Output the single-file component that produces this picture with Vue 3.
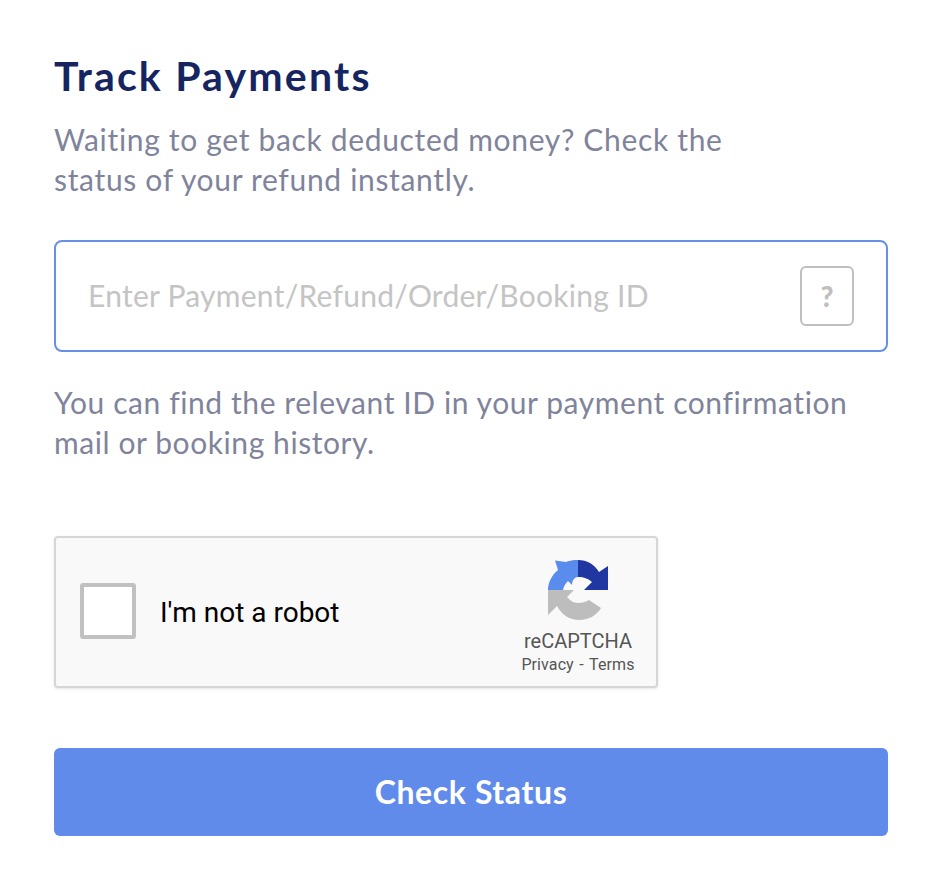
<script setup>
const title = 'Track Payments'
</script>

<template>
  <main class="page">
    <h1 class="title">{{ title }}</h1>
    <p class="copy">Waiting to get back deducted money? Check the<br />status of your refund instantly.</p>
    <div class="field">
      <span class="placeholder">Enter Payment/Refund/Order/Booking ID</span>
      <span class="help">?</span>
    </div>
    <p class="copy hint">You can find the relevant ID in your payment confirmation<br />mail or booking history.</p>
    <div class="captcha">
      <span class="box"></span>
      <span class="robot">I'm not a robot</span>
      <div class="brand">
        <svg class="logo" viewBox="0 0 60 60" width="60" height="60">
          <path fill="#5a8cee" d="M30 0C25 0 22 0.500 18 2L7 0.500L10 10C4 15 0 22 0 30H15C15.500 27 17 24 20 21L24 25C24 20 27 17 30 17Z" />
          <path fill="#2036a0" d="M30 0C39 0 46 4 51 12L60 6V30H36L44 22C41 19 36 17 30 17Z" />
          <path fill="#bdbdbd" d="M0 30V55L9 46C14 55 22 60 31 60C41 60 49 55 53 48L41 40C38 42 34 43 30 43C25 43 22 40 19 37L26 30Z" />
        </svg>
        <span class="brand-name">reCAPTCHA</span>
        <span class="brand-links">Privacy - Terms</span>
      </div>
    </div>
    <button class="submit" type="button"><span class="submit-label">Check Status</span></button>
  </main>
</template>

<style scoped>
.page {
  box-sizing: border-box;
  width: 940px;
  height: 884px;
  padding: 52px 52px 0 54px;
  background: #fff;
  font-family: Lato, "Noto Sans", sans-serif;
}
.title {
  margin: 0;
  font-size: 41px;
  line-height: 48px;
  font-weight: 700;
  color: #16255f;
  letter-spacing: 2.2px;
}
.copy {
  margin: 19px 0 0;
  font-size: 30px;
  line-height: 40px;
  letter-spacing: 0.67px;
  color: #7f849c;
}
.field {
  box-sizing: border-box;
  margin-top: 41px;
  height: 112px;
  padding: 0 32px;
  border: 2px solid #6590e6;
  border-radius: 8px;
  display: flex;
  align-items: center;
  justify-content: space-between;
}
.placeholder {
  margin-top: -2px;
  font-size: 30px;
  letter-spacing: 0.26px;
  color: #c4c4c4;
}
.help {
  box-sizing: border-box;
  width: 54px;
  height: 60px;
  border: 2px solid #bfbfbf;
  border-radius: 6px;
  display: flex;
  align-items: center;
  justify-content: center;
  font-size: 28px;
  font-weight: 900;
  color: #bfbfbf;
}
.hint {
  margin-top: 30px;
  letter-spacing: 0.58px;
}
.captcha {
  box-sizing: border-box;
  margin-top: 74px;
  width: 604px;
  height: 152px;
  padding: 0 21px 0 24px;
  border: 2px solid #d6d6d6;
  border-radius: 4px;
  background: #f9f9f9;
  box-shadow: 0 1px 3px rgba(0, 0, 0, 0.1);
  display: flex;
  align-items: center;
  font-family: Roboto, sans-serif;
}
.box {
  box-sizing: border-box;
  width: 56px;
  height: 56px;
  margin-top: -3px;
  border: 4px solid #c1c1c1;
  border-radius: 3px;
  background: #fff;
}
.robot {
  margin-left: 24px;
  font-size: 28px;
  color: #000;
}
.brand {
  margin-left: auto;
  padding-top: 10px;
  width: 114px;
  display: flex;
  flex-direction: column;
  align-items: center;
  color: #555;
}
.logo {
  display: block;
  margin-bottom: 8px;
}
.brand-name {
  font-size: 20px;
  line-height: 26px;
}
.brand-links {
  margin-top: 1px;
  font-size: 16px;
  line-height: 20px;
  letter-spacing: 0.1px;
  word-spacing: 1.5px;
  white-space: nowrap;
}
.submit {
  display: flex;
  align-items: center;
  justify-content: center;
  width: 834px;
  height: 88px;
  margin-top: 60px;
  padding: 0 0 2px;
  border: 0;
  border-radius: 6px;
  background: #608bea;
  color: #fff;
  font-family: Lato, "Noto Sans", sans-serif;
  font-size: 32px;
  font-weight: 700;
  letter-spacing: 0.6px;
}
</style>
